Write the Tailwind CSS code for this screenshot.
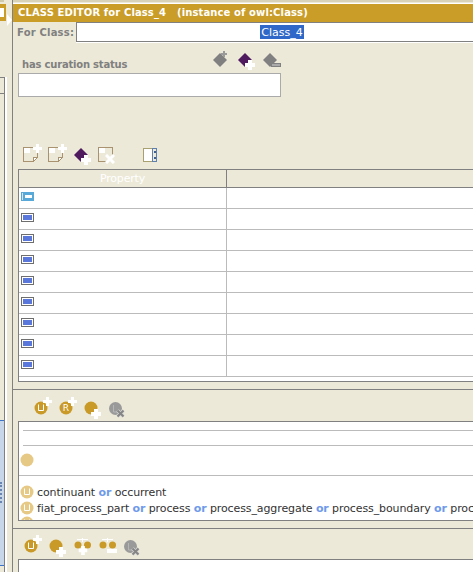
<!DOCTYPE html>
<html>
<head>
<meta charset="utf-8">
<script src="https://cdn.jsdelivr.net/npm/@tailwindcss/browser@4"></script>
</head>
<body class="bg-[#ece9d8]">
<svg width="0" height="0" class="absolute">
  <defs>
    <symbol id="star" viewBox="0 0 9 9"><path d="M3 0h3v3h3v3h-3v3h-3v-3h-3v-3h3z" fill="#fff"/></symbol>
    <symbol id="plus" viewBox="0 0 10 10"><path d="M3 0h4v3h3v4h-3v3h-4v-3h-3v-4h3z" fill="#fff"/></symbol>
    <symbol id="page" viewBox="0 0 16 16" shape-rendering="crispEdges">
      <path d="M.5.5h14v10l-4 4h-10z" fill="#ece9d8" stroke="#a8926f"/>
      <path d="M1 1h6v5h-6z" fill="#fff"/>
      <path d="M10.500 14v-4h4" fill="#fff" stroke="#a8926f"/>
    </symbol>
    <symbol id="row" viewBox="0 0 13 9" shape-rendering="crispEdges">
      <rect x=".5" y=".5" width="12" height="8" fill="#fff" stroke="#6e6e6e"/>
      <rect x="2" y="2" width="9" height="5" fill="#5a78dc"/>
    </symbol>
    <symbol id="dot" viewBox="0 0 14 14"><circle cx="7" cy="7" r="6.500" fill="#c99a28"/></symbol>
    <symbol id="dotu" viewBox="0 0 14 14"><circle cx="7" cy="7" r="6.500" fill="#c99a28"/><path d="M4.500 3.500v6h5v-6" fill="none" stroke="#fff"/></symbol>
    <symbol id="pale" viewBox="0 0 14 14"><circle cx="7" cy="7" r="6.500" fill="#e5c985"/><path d="M4.500 3.500v6h5v-6" fill="none" stroke="#fff"/></symbol>
    <symbol id="gone" viewBox="0 0 16 16">
      <circle cx="6.500" cy="6.500" r="6.500" fill="#9a9a9a"/>
      <path d="M4.500 3v7h4" fill="none" stroke="#b5b5b5"/>
      <path d="M8.500 8.500l6 6M14.500 8.500l-6 6" stroke="#d5d5d5" stroke-width="3.500"/>
      <path d="M8.500 8.500l6 6M14.500 8.500l-6 6" stroke="#858585" stroke-width="2"/>
    </symbol>
  </defs>
</svg>

<div class="flex w-[473px] h-[572px] overflow-hidden font-['DejaVu_Sans',sans-serif] text-[11px] leading-none">

  <!-- left strip, neighbouring panel cut off -->
  <div class="relative w-[12px] shrink-0 flex">
    <div class="w-[4px] flex flex-col">
      <div class="h-[2px] bg-[#cfc9ae]"></div>
      <div class="h-[2px]"></div>
      <div class="h-[17px] w-[6px] bg-[#c99d28] flex items-center shrink-0"><div class="w-[4px] h-[9px] bg-white"></div></div>
      <div class="h-[56px] shrink-0"></div>
      <div class="h-[16px] shrink-0 border-t border-[#808080]"></div>
      <div class="h-[327px] shrink-0 border-t border-[#808080]"></div>
      <div class="h-[145px] shrink-0 border-t border-[#3d74c8] bg-[#c8d6ea] pt-[61px]">
        <div class="h-[21px] w-[2px] border-l-2 border-dotted border-[#6a86b0]"></div>
      </div>
      <div class="flex-1 border-t border-[#3d74c8]"></div>
    </div>
    <div class="w-[3px] border-l border-[#808080] bg-white mt-[77px]"></div>
    <svg class="absolute left-[7px] top-[14px]" width="5" height="12"><path d="M0 0l5 6-5 6z" fill="#fff"/></svg>
  </div>

  <!-- class editor -->
  <div class="flex-1 min-w-0 flex flex-col border-l border-[#808080]">
    <div class="h-[4px] border-t-2 border-[#d8d3b8] border-b border-b-white"></div>
    <div class="h-[18px] shrink-0 bg-[#c99d28] text-white font-bold text-[10px] tracking-[0.12px] pl-[5px] flex items-center whitespace-pre">CLASS EDITOR for Class_4   (instance of owl:Class)</div>

    <div class="h-[20px] shrink-0 flex">
      <div class="w-[63px] pl-[4px] flex items-center font-bold text-[10px] tracking-[0.2px] text-[#808080] pt-[1px] whitespace-nowrap">For Class:</div>
      <div class="flex-1 bg-white border-t border-l border-b border-[#808080] shadow-[0_1px_0_#ffffff] flex items-center justify-center pl-[14px]">
        <span class="bg-[#2f68c8] text-white px-[1px] h-[14px] flex items-center">Class_4</span>
      </div>
    </div>

    <div class="h-[127px] shrink-0 pl-[5px] flex flex-col">
      <div class="w-[263px] h-[31px] shrink-0 flex items-start justify-between pt-[9px]">
        <span class="font-bold text-[10px] tracking-[-0.2px] text-[#808080] pl-[4px] mt-[9px]">has curation status</span>
        <div class="flex gap-[7px]">
          <svg width="18" height="20" viewBox="0 0 18 20"><path d="M7 2l7 7-7 7-7-7z" fill="#808080"/><path d="M10 0h2v2h2v2h-2v2h-2v-2h-2v-2h2z" fill="#9a9a9a"/></svg>
          <svg width="18" height="20" viewBox="0 0 18 20"><path d="M7 2l7 7-7 7-7-7z" fill="#4f1a5e"/><use href="#plus" x="7" y="9" width="10" height="10"/></svg>
          <svg width="18" height="20" viewBox="0 0 18 20"><path d="M7 2l7 7-7 7-7-7z" fill="#808080"/><rect x="8.500" y="12.500" width="9" height="3" fill="#aaa" stroke="#808080"/></svg>
        </div>
      </div>
      <div class="w-[263px] h-[24px] shrink-0 bg-white border border-[#aaaaaa]"></div>
      <div class="flex items-start gap-[9px] pt-[50px] pl-[5px]">
        <div class="relative w-[16px] h-[16px]"><svg class="w-[16px] h-[16px]"><use href="#page"/></svg><svg class="absolute -right-[3px] -top-[3px] w-[9px] h-[9px]"><use href="#star"/></svg></div>
        <div class="relative w-[16px] h-[16px]"><svg class="w-[16px] h-[16px]"><use href="#page"/></svg><svg class="absolute -right-[3px] -top-[3px] w-[9px] h-[9px]"><use href="#star"/></svg></div>
        <svg class="ml-[1px] -mt-[1px]" width="18" height="20" viewBox="0 0 18 20"><path d="M7 2l7 7-7 7-7-7z" fill="#4f1a5e"/><use href="#plus" x="7" y="9" width="10" height="10"/></svg>
        <div class="relative w-[16px] h-[16px] -ml-[3px]">
          <svg class="w-[16px] h-[16px]"><use href="#page"/></svg>
          <svg class="absolute -right-[1px] -bottom-[1px]" width="10" height="10" viewBox="0 0 10 10"><path d="M1 1l8 8M9 1l-8 8" stroke="#fff" stroke-width="3"/></svg>
        </div>
        <svg class="ml-[20px] mt-[1px]" width="15" height="15" viewBox="0 0 15 15" shape-rendering="crispEdges">
          <rect x=".5" y=".5" width="13" height="13" fill="#fff" stroke="#a8a070"/>
          <rect x="9.500" y=".5" width="4" height="13" fill="#ece9d8" stroke="#5f7fb0"/>
          <rect x="11" y="3" width="2" height="2" fill="#3f5f90"/>
          <rect x="11" y="9" width="2" height="2" fill="#3f5f90"/>
        </svg>
      </div>
    </div>

    <!-- property table -->
    <div class="ml-[5px] h-[213px] shrink-0 border-t border-l border-b border-[#808080] bg-white">
      <div class="h-[17px] bg-[#ece9d8] border-b border-[#808080] flex box-content">
        <div class="w-[208px] border-r border-[#808080] text-white text-center tracking-[-0.2px] leading-[18px]">Property</div>
      </div>
      <div class="h-[189px]">
        <div class="h-[21px] flex border-b border-[#bbbbbb]"><div class="w-[208px] border-r border-[#bbbbbb] pl-[2px] pt-[4px]"><svg width="13" height="9" viewBox="0 0 13 9" shape-rendering="crispEdges"><rect width="13" height="9" fill="#58a8d8"/><rect x="1" y="1" width="1" height="7" fill="#cfe6f4"/><rect x="4" y="3" width="7" height="3" fill="#fff"/></svg></div></div>
        <div class="h-[21px] flex border-b border-[#bbbbbb]"><div class="w-[208px] border-r border-[#bbbbbb] pl-[2px] pt-[4px]"><svg class="w-[13px] h-[9px]"><use href="#row"/></svg></div></div>
        <div class="h-[21px] flex border-b border-[#bbbbbb]"><div class="w-[208px] border-r border-[#bbbbbb] pl-[2px] pt-[4px]"><svg class="w-[13px] h-[9px]"><use href="#row"/></svg></div></div>
        <div class="h-[21px] flex border-b border-[#bbbbbb]"><div class="w-[208px] border-r border-[#bbbbbb] pl-[2px] pt-[4px]"><svg class="w-[13px] h-[9px]"><use href="#row"/></svg></div></div>
        <div class="h-[21px] flex border-b border-[#bbbbbb]"><div class="w-[208px] border-r border-[#bbbbbb] pl-[2px] pt-[4px]"><svg class="w-[13px] h-[9px]"><use href="#row"/></svg></div></div>
        <div class="h-[21px] flex border-b border-[#bbbbbb]"><div class="w-[208px] border-r border-[#bbbbbb] pl-[2px] pt-[4px]"><svg class="w-[13px] h-[9px]"><use href="#row"/></svg></div></div>
        <div class="h-[21px] flex border-b border-[#bbbbbb]"><div class="w-[208px] border-r border-[#bbbbbb] pl-[2px] pt-[4px]"><svg class="w-[13px] h-[9px]"><use href="#row"/></svg></div></div>
        <div class="h-[21px] flex border-b border-[#bbbbbb]"><div class="w-[208px] border-r border-[#bbbbbb] pl-[2px] pt-[4px]"><svg class="w-[13px] h-[9px]"><use href="#row"/></svg></div></div>
        <div class="h-[21px] flex border-b border-[#bbbbbb]"><div class="w-[208px] border-r border-[#bbbbbb] pl-[2px] pt-[4px]"><svg class="w-[13px] h-[9px]"><use href="#row"/></svg></div></div>
      </div>
    </div>

    <!-- superclasses -->
    <div class="h-[7px] shrink-0"></div>
    <div class="h-[32px] shrink-0 border-t border-[#808080] flex items-start gap-[11px] pl-[21px] pt-[11px]">
      <div class="relative w-[14px] h-[14px]"><svg class="w-[14px] h-[14px]"><use href="#dotu"/></svg><svg class="absolute -right-[4px] -top-[4px] w-[9px] h-[9px]"><use href="#star"/></svg></div>
      <div class="relative w-[14px] h-[14px]"><svg class="w-[14px] h-[14px]"><use href="#dot"/></svg><span class="absolute inset-0 flex items-center justify-center text-white text-[9px]">R</span><svg class="absolute -right-[4px] -top-[4px] w-[9px] h-[9px]"><use href="#star"/></svg></div>
      <div class="relative w-[14px] h-[14px]"><svg class="w-[14px] h-[14px]"><use href="#dot"/></svg><svg class="absolute -right-[3px] -bottom-[4px] w-[10px] h-[10px]"><use href="#plus"/></svg></div>
      <svg class="w-[16px] h-[16px] mt-[1px]"><use href="#gone"/></svg>
    </div>
    <div class="ml-[5px] h-[100px] shrink-0 border-t border-l border-b border-[#808080] bg-white flex flex-col overflow-hidden tracking-[-0.1px]">
      <div class="h-[8px] ml-[4px] border-b border-[#bbbbbb] box-content"></div>
      <div class="h-[15px] ml-[4px] border-b border-[#bbbbbb] box-content"></div>
      <div class="h-[31px] border-b border-[#bbbbbb] box-content pl-[1px] flex items-center"><svg width="14" height="14"><circle cx="7" cy="7" r="6.500" fill="#e5c985"/></svg></div>
      <div class="h-[8px] shrink-0"></div>
      <div class="h-[16px] shrink-0 flex items-center gap-[3px] pl-[1px] text-[#333333] whitespace-nowrap"><svg class="w-[14px] h-[14px] shrink-0"><use href="#pale"/></svg><span>continuant <b class="text-[#6f9aea]">or</b> occurrent</span></div>
      <div class="h-[16px] shrink-0 flex items-center gap-[3px] pl-[1px] text-[#333333] whitespace-nowrap"><svg class="w-[14px] h-[14px] shrink-0"><use href="#pale"/></svg><span>fiat_process_part <b class="text-[#6f9aea]">or</b> process <b class="text-[#6f9aea]">or</b> process_aggregate <b class="text-[#6f9aea]">or</b> process_boundary <b class="text-[#6f9aea]">or</b> process_part</span></div>
      <div class="h-[4px] shrink-0 pl-[1px]"><svg class="w-[14px] h-[14px]"><use href="#pale"/></svg></div>
    </div>

    <!-- disjoints -->
    <div class="h-[7px] shrink-0"></div>
    <div class="h-[31px] shrink-0 border-t border-[#808080] flex items-start gap-[11px] pl-[11px] pt-[10px]">
      <div class="relative w-[14px] h-[14px]"><svg class="w-[14px] h-[14px]"><use href="#dotu"/></svg><svg class="absolute -right-[4px] -top-[4px] w-[9px] h-[9px]"><use href="#star"/></svg></div>
      <div class="relative w-[14px] h-[14px]"><svg class="w-[14px] h-[14px]"><use href="#dot"/></svg><svg class="absolute -right-[3px] -bottom-[4px] w-[10px] h-[10px]"><use href="#plus"/></svg></div>
      <svg width="18" height="18" viewBox="0 0 18 18" class="-mt-[1px] -mr-[4px]"><path d="M3 1.500h11M8.500 0v4" stroke="#fff" fill="none"/><circle cx="4" cy="7" r="3.500" fill="#c99a28"/><circle cx="13.500" cy="7" r="3.500" fill="#c99a28"/><use href="#plus" x="4.500" y="8" width="9" height="9"/></svg>
      <svg width="18" height="18" viewBox="0 0 18 18" class="-mt-[1px] -mr-[4px]"><path d="M3 1.500h11M8.500 0v4" stroke="#fff" fill="none"/><circle cx="4" cy="7" r="3.500" fill="#c99a28"/><circle cx="13.500" cy="7" r="3.500" fill="#c99a28"/><rect x="8" y="11" width="10" height="4" fill="#fff"/></svg>
      <svg class="w-[16px] h-[16px] mt-[1px]"><use href="#gone"/></svg>
    </div>
    <div class="ml-[5px] flex-1 border-t border-l border-[#808080] bg-white"></div>
  </div>
</div>
</body>
</html>
